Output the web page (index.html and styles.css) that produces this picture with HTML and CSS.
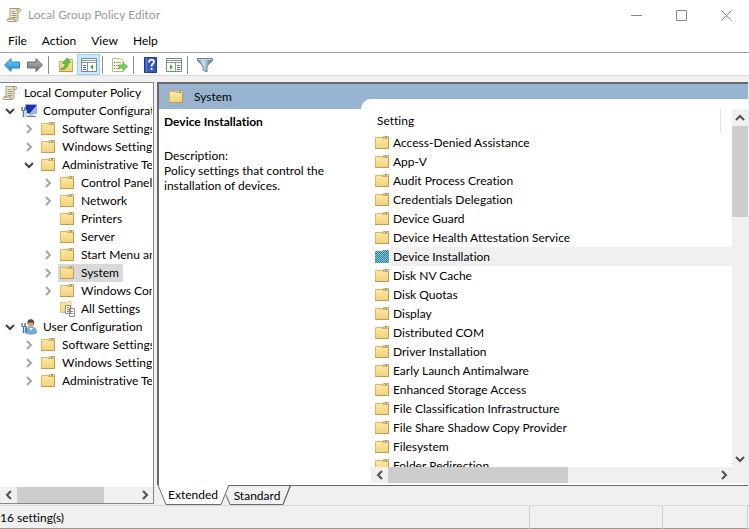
FILE: index.html
```html
<!DOCTYPE html>
<html lang="en">
<head>
<meta charset="utf-8">
<title>Local Group Policy Editor</title>
<link rel="stylesheet" href="styles.css">
</head>
<body>
<svg class="defs" aria-hidden="true">
  <defs>
    <linearGradient id="gold" x1="0" y1="0" x2="0" y2="1"><stop offset="0" stop-color="#ffebab"/><stop offset="1" stop-color="#f3d179"/></linearGradient>
    <linearGradient id="paper" x1="0" y1="0" x2="1" y2="0"><stop offset="0" stop-color="#fffbe9"/><stop offset="1" stop-color="#e0d5b4"/></linearGradient>
    <linearGradient id="blue" x1="0" y1="0" x2="0" y2="1"><stop offset="0" stop-color="#7ad6fa"/><stop offset="1" stop-color="#1584d0"/></linearGradient>
    <linearGradient id="grey" x1="0" y1="0" x2="0" y2="1"><stop offset="0" stop-color="#b5b5b5"/><stop offset="1" stop-color="#757575"/></linearGradient>
    <linearGradient id="steel" x1="0" y1="0" x2="1" y2="0"><stop offset="0" stop-color="#5b84a3"/><stop offset=".4" stop-color="#cfe0ea"/><stop offset="1" stop-color="#3c6687"/></linearGradient>
    <pattern id="checks" width="2" height="2" patternUnits="userSpaceOnUse"><rect width="2" height="2" fill="#8cc8d2"/><path d="M0 0h1v1h-1zM1 1h1v1h-1z" fill="#2a809c"/></pattern>
  </defs>
  <symbol id="folder" viewBox="0 0 16 16"><path d="M1.500 2.500H8l1.500-1h5v12h-13z" fill="url(#gold)" stroke="#dbb963"/><path d="M8.500 3.500l1.500-2h4.500v2z" fill="#fff8dc" stroke="#b99c58" stroke-width=".8"/><path d="M11 2.500h2" stroke="#a8946a"/><path d="M1 13.500h14M14.500 4v10" stroke="#c09d4c" fill="none"/></symbol>
  <symbol id="folder-on" viewBox="0 0 16 16"><path d="M1 2h8V1h6v13H1z" fill="url(#checks)"/></symbol>
  <symbol id="scroll" viewBox="0 0 16 16"><path d="M4 1.500h9.500c1.500 0 1.500 3 0 3H12v7.500c0 1.500-.5 2.500-2 2.500H2c-1.500 0-1.500-2.500 0-2.500h2z" fill="url(#paper)" stroke="#a99c7e"/><path d="M5.500 4.500H9M5.500 6.500h5M5.500 8.500h5M5.500 10.500h5" stroke="#a1967f"/><path d="M2 12h7v2.500M12 4.500c-1 0-1-2 0-3" fill="none" stroke="#9b8d6b"/></symbol>
  <symbol id="computer" viewBox="0 0 16 16"><path d="M4.500 1.500h11v9h-11z" fill="#1830b8" stroke="#a3aebd"/><path d="M15 3v7H9z" fill="#9fb6f5"/><path d="M8 11h4l1 2H7z" fill="#bcc3c9"/><path d="M6 13.500h9" stroke="#707b86"/><path d="M1 4v3l1.500 1L4 7V4M2.500 8v6" fill="none" stroke="#547b9d" stroke-width="1.500"/><path d="M5 7v7" stroke="#b9d7eb" stroke-width="2"/></symbol>
  <symbol id="user" viewBox="0 0 16 16"><path d="M4 14c0-4 2-6 6-6s5.500 2 5.500 6c-3 1.500-8 1.500-11.500 0z" fill="#76a9da" stroke="#5f93c5" stroke-width=".7"/><path d="M8 9l2 2.500L12 9z" fill="#fff"/><ellipse cx="9.800" cy="5.500" rx="2.700" ry="3.500" fill="#d4a17b"/><path d="M6.800 5.500c-1-4 1-5.200 3-5.200 3 0 4 2.500 2.700 6.200l-.7-3L8 3.500z" fill="#5c4030"/><path d="M1 4v3l1.500 1L4 7V4M2.500 8v6" fill="none" stroke="#456f92" stroke-width="1.300"/><path d="M5 7v6" stroke="#2f73a8" stroke-width="1.500"/></symbol>
  <symbol id="all" viewBox="0 0 16 16"><path d="M1.500 1.500H8l1-1h3v11H1.500z" fill="url(#gold)" stroke="#e0c67f"/><path d="M6.500 4.500h5v8h-5zM10.500 7.500h5v8h-5z" fill="#fff" stroke="#8b8b8b"/><path d="M8 6.500h2M8 8.500h2M8 10.500h2M12 10.500h2M12 12.500h2" stroke="#888"/></symbol>
  <symbol id="right" viewBox="0 0 10 10"><path d="M3 1l4 4-4 4" fill="none" stroke="currentColor" stroke-width="2"/></symbol>
  <symbol id="down" viewBox="0 0 10 10"><path d="M1 3l4 4 4-4" fill="none" stroke="currentColor" stroke-width="2"/></symbol>
  <symbol id="arrow" viewBox="0 0 16 16"><path d="M.5 8L7 1.500V5h8.500v6H7v3.500z"/></symbol>
</svg>

<div class="window">
  <header class="title">
    <svg class="icon"><use href="#scroll"/></svg>
    <h1>Local Group Policy Editor</h1>
    <button class="caption" aria-label="Minimize"><svg viewBox="0 0 11 11"><path d="M0 5.500h11"/></svg></button>
    <button class="caption" aria-label="Maximize"><svg viewBox="0 0 11 11"><path d="M.5 .5h10v10H.5z"/></svg></button>
    <button class="caption" aria-label="Close"><svg viewBox="0 0 11 11"><path d="M.5 .5l10 10M10.500 .5l-10 10"/></svg></button>
  </header>
  <nav class="menu">
    <button>File</button><button>Action</button><button>View</button><button>Help</button>
  </nav>
  <div class="toolbar">
    <button class="tool" aria-label="Back"><svg class="icon" fill="url(#blue)" stroke="#2d82b8"><use href="#arrow"/></svg></button>
    <button class="tool" aria-label="Forward"><svg class="icon flip" fill="url(#grey)" stroke="#6b6b6b"><use href="#arrow"/></svg></button>
    <span class="sep"></span>
    <button class="tool" aria-label="Up one level"><svg class="icon" viewBox="0 0 16 16"><path d="M1.500 4.500H8l1.500-2h5v12h-13z" fill="url(#gold)" stroke="#cfae5c"/><path d="M1 14.500h14" stroke="#b8954b"/><path d="M3 11.500c3-.5 4-2.500 4-5H4.500L9 1l4 4.500h-2.500c0 4.500-3 7.500-7.500 7z" fill="#62c63c" stroke="#3f9327" stroke-width=".6"/></svg></button>
    <button class="tool on" aria-label="Show console tree" aria-pressed="true"><svg class="icon" viewBox="0 0 16 16"><path d="M.5 1.500h15v13H.5z" fill="#fff" stroke="#7b8791"/><path d="M1 3.500h14M1 5.500h14M6.500 6v8" stroke="#8b959d"/><path d="M2 8.500h3M2 10.500h3M2 12.500h3" stroke="#54748f"/><path d="M12 7.500v5L9 10z" fill="#39a935"/></svg></button>
    <span class="sep"></span>
    <button class="tool" aria-label="Export list"><svg class="icon" viewBox="0 0 16 16"><path d="M.5 1.500h8l3 3v10H.5z" fill="#fffdee" stroke="#c2b692"/><path d="M2 5.500h1M2 8.500h1M2 11.500h1" stroke="#555"/><path d="M4 5.500h5M4 8.500h4M4 11.500h4" stroke="#a29b86"/><path d="M7 8h4V5.500l4.500 4-4.500 4V11H7z" fill="#74d350" stroke="#4fab36" stroke-width=".7"/></svg></button>
    <span class="sep"></span>
    <button class="tool" aria-label="Help"><svg class="icon" viewBox="0 0 16 16"><path d="M1.500 .5h12v15h-12z" fill="#3558bd" stroke="#203b8d"/><path d="M3.500 1v14" stroke="#6482d5"/><path d="M5.800 5.500c0-4 5.400-3.500 5.100-.5-.2 2-2.400 2-2.400 4.500M8.500 11v2" fill="none" stroke="#fff" stroke-width="1.800"/></svg></button>
    <button class="tool" aria-label="Show action pane"><svg class="icon" viewBox="0 0 16 16"><path d="M.5 1.500h15v13H.5z" fill="#fff" stroke="#7b8791"/><path d="M1 3.500h14M1 5.500h14M9.500 6v8" stroke="#8b959d"/><path d="M11 8.500h3M11 10.500h3M11 12.500h3" stroke="#54748f"/><path d="M4 7.500v5L7 10z" fill="#39a935"/></svg></button>
    <span class="sep"></span>
    <button class="tool" aria-label="Filter"><svg class="icon" viewBox="0 0 16 16"><path d="M.5 1.500h15v2L10 9v6l-4-2V9L.5 3.500z" fill="url(#steel)" stroke="#5f8199"/><path d="M1 2.500h14" stroke="#c6d9e5"/></svg></button>
  </div>

  <main class="panes">
    <section class="left" aria-label="Console tree">
      <ul class="tree">
        <li class="root"><svg class="icon"><use href="#scroll"/></svg><span>Local Computer Policy</span></li>
        <li class="d1 open"><svg class="chev"><use href="#down"/></svg><svg class="icon"><use href="#computer"/></svg><span>Computer Configuration</span></li>
        <li class="d2"><svg class="chev"><use href="#right"/></svg><svg class="icon"><use href="#folder"/></svg><span>Software Settings</span></li>
        <li class="d2"><svg class="chev"><use href="#right"/></svg><svg class="icon"><use href="#folder"/></svg><span>Windows Settings</span></li>
        <li class="d2 open"><svg class="chev"><use href="#down"/></svg><svg class="icon"><use href="#folder"/></svg><span>Administrative Templates</span></li>
        <li class="d3"><svg class="chev"><use href="#right"/></svg><svg class="icon"><use href="#folder"/></svg><span>Control Panel</span></li>
        <li class="d3"><svg class="chev"><use href="#right"/></svg><svg class="icon"><use href="#folder"/></svg><span>Network</span></li>
        <li class="d3"><i class="chev"></i><svg class="icon"><use href="#folder"/></svg><span>Printers</span></li>
        <li class="d3"><i class="chev"></i><svg class="icon"><use href="#folder"/></svg><span>Server</span></li>
        <li class="d3"><svg class="chev"><use href="#right"/></svg><svg class="icon"><use href="#folder"/></svg><span>Start Menu and Taskbar</span></li>
        <li class="d3 current"><svg class="chev"><use href="#right"/></svg><svg class="icon"><use href="#folder"/></svg><span>System</span></li>
        <li class="d3"><svg class="chev"><use href="#right"/></svg><svg class="icon"><use href="#folder"/></svg><span>Windows Components</span></li>
        <li class="d3"><i class="chev"></i><svg class="icon"><use href="#all"/></svg><span>All Settings</span></li>
        <li class="d1 open"><svg class="chev"><use href="#down"/></svg><svg class="icon"><use href="#user"/></svg><span>User Configuration</span></li>
        <li class="d2"><svg class="chev"><use href="#right"/></svg><svg class="icon"><use href="#folder"/></svg><span>Software Settings</span></li>
        <li class="d2"><svg class="chev"><use href="#right"/></svg><svg class="icon"><use href="#folder"/></svg><span>Windows Settings</span></li>
        <li class="d2"><svg class="chev"><use href="#right"/></svg><svg class="icon"><use href="#folder"/></svg><span>Administrative Templates</span></li>
      </ul>
      <div class="bar">
        <button aria-label="Scroll left"><svg class="chev flip"><use href="#right"/></svg></button>
        <div class="track"><div class="thumb tree-thumb"></div></div>
        <button aria-label="Scroll right"><svg class="chev"><use href="#right"/></svg></button>
      </div>
    </section>

    <div class="right">
      <section class="view">
        <div class="banner"><svg class="icon"><use href="#folder"/></svg><h2>System</h2></div>
        <div class="about">
          <h3>Device Installation</h3>
          <p>Description:<br>Policy settings that control the installation of devices.</p>
        </div>
        <div class="listing">
          <div class="cap"></div>
          <div class="rows">
            <div class="colhead"><span>Setting</span></div>
            <ul class="list">
              <li><svg class="icon"><use href="#folder"/></svg><span>Access-Denied Assistance</span></li>
              <li><svg class="icon"><use href="#folder"/></svg><span>App-V</span></li>
              <li><svg class="icon"><use href="#folder"/></svg><span>Audit Process Creation</span></li>
              <li><svg class="icon"><use href="#folder"/></svg><span>Credentials Delegation</span></li>
              <li><svg class="icon"><use href="#folder"/></svg><span>Device Guard</span></li>
              <li><svg class="icon"><use href="#folder"/></svg><span>Device Health Attestation Service</span></li>
              <li class="picked"><svg class="icon"><use href="#folder-on"/></svg><span>Device Installation</span></li>
              <li><svg class="icon"><use href="#folder"/></svg><span>Disk NV Cache</span></li>
              <li><svg class="icon"><use href="#folder"/></svg><span>Disk Quotas</span></li>
              <li><svg class="icon"><use href="#folder"/></svg><span>Display</span></li>
              <li><svg class="icon"><use href="#folder"/></svg><span>Distributed COM</span></li>
              <li><svg class="icon"><use href="#folder"/></svg><span>Driver Installation</span></li>
              <li><svg class="icon"><use href="#folder"/></svg><span>Early Launch Antimalware</span></li>
              <li><svg class="icon"><use href="#folder"/></svg><span>Enhanced Storage Access</span></li>
              <li><svg class="icon"><use href="#folder"/></svg><span>File Classification Infrastructure</span></li>
              <li><svg class="icon"><use href="#folder"/></svg><span>File Share Shadow Copy Provider</span></li>
              <li><svg class="icon"><use href="#folder"/></svg><span>Filesystem</span></li>
              <li><svg class="icon"><use href="#folder"/></svg><span>Folder Redirection</span></li>
            </ul>
          </div>
          <div class="bar upright">
            <button aria-label="Scroll up"><svg class="chev turn"><use href="#down"/></svg></button>
            <div class="track"><div class="thumb list-thumb"></div></div>
            <button aria-label="Scroll down"><svg class="chev"><use href="#down"/></svg></button>
          </div>
          <div class="bar">
            <button aria-label="Scroll left"><svg class="chev flip"><use href="#right"/></svg></button>
            <div class="track"><div class="thumb wide-thumb"></div></div>
            <button aria-label="Scroll right"><svg class="chev"><use href="#right"/></svg></button>
          </div>
          <div class="corner"></div>
        </div>
      </section>
      <div class="tabs">
        <button class="tab active"><svg viewBox="0 0 72 20" aria-hidden="true"><path d="M0 0h72l-8 19.500H9z" fill="#fff"/><path d="M1 0l8 19.500h55L72 0" fill="none" stroke="#696969"/></svg><span>Extended</span></button>
        <button class="tab"><svg viewBox="0 0 66 19" aria-hidden="true"><path d="M2 9l4 9.500h53L66 0M59 18.500L66.500 0" fill="none" stroke="#696969"/></svg><span>Standard</span></button>
      </div>
    </div>
  </main>
  <footer class="status"><span>16 setting(s)</span><span></span><span></span></footer>
</div>
</body>
</html>
```
FILE: styles.css
```css
* { box-sizing: border-box; }

body {
  margin: 0;
  background: #f0f0f0;
  color: #000;
  font: 12px/16px Lato, "Open Sans", sans-serif;
  font-variant-ligatures: none;
}

h1, h2, h3, p, ul { margin: 0; padding: 0; font-size: inherit; font-weight: normal; }
ul { list-style: none; }
svg { display: block; flex: none; overflow: visible; }

button {
  display: flex;
  align-items: center;
  justify-content: center;
  margin: 0;
  padding: 0;
  border: 0;
  background: none;
  color: inherit;
  font: inherit;
  font-variant-ligatures: none;
}

.defs { position: absolute; width: 0; height: 0; }
.icon { width: 16px; height: 16px; }
.chev { width: 10px; height: 10px; flex: none; }
.flip { transform: scaleX(-1); }
.turn { transform: scaleY(-1); }

.window {
  display: flex;
  flex-direction: column;
  height: 100vh;
  border-bottom: 1px solid #999;
}

.title {
  display: flex;
  align-items: center;
  height: 30px;
  padding-left: 6px;
  background: #fff;
  color: #999;
}
.title h1 { flex: 1; margin-left: 6px; }
.caption { width: 45px; height: 30px; }
.caption svg { width: 11px; height: 11px; fill: none; stroke: #888; }

.menu {
  display: flex;
  gap: 15px;
  height: 22px;
  padding-left: 8px;
  background: #fff;
}

.toolbar {
  display: flex;
  align-items: center;
  height: 24px;
  padding-top: 1px;
  border-top: 1px solid #a0a0a0;
  border-bottom: 1px solid #dadada;
  background: #fff;
}
.tool { width: 23px; height: 21px; }
.tool.on { border: 1px solid #99d1ff; background: #cce8ff; }
.sep { width: 1px; height: 18px; margin: 0 5px 0 2px; background: #8c8c8c; }

.panes {
  display: flex;
  gap: 3px;
  flex: 1;
  min-height: 0;
  margin-top: 6px;
}

.left {
  display: flex;
  flex-direction: column;
  width: 154px;
  margin-bottom: 1px;
  border: 1px solid #828790;
  border-left: 0;
  background: #fff;
}
.tree {
  flex: 1;
  min-height: 0;
  margin-right: 1px;
  padding-top: 1px;
  overflow: hidden;
}
.tree li {
  display: flex;
  align-items: center;
  gap: 6px;
  height: 18px;
  white-space: nowrap;
}
.tree .chev { color: #a6a6a6; }
.tree .open .chev { color: #404040; }
.tree .root { padding-left: 2px; }
.tree .d1 { padding-left: 5px; }
.tree .d2 { padding-left: 24px; }
.tree .d3 { padding-left: 43px; }
.tree .current {
  width: 123px;
  background: linear-gradient(to right, transparent 58px, #d9d9d9 58px);
}

.bar {
  display: flex;
  height: 16px;
  background: #f0f0f0;
  color: #505050;
}
.bar button { width: 17px; height: 16px; flex: none; }
.track { flex: 1; }
.thumb { background: #cdcdcd; }
.bar .thumb { height: 100%; }
.tree-thumb { width: 73%; }
.wide-thumb { width: 55%; }
.upright { flex-direction: column; height: auto; }
.upright .list-thumb { height: 28%; }
.upright button { width: 16px; height: 17px; }

.right {
  display: flex;
  flex-direction: column;
  flex: 1;
  min-width: 0;
}
.view {
  display: grid;
  grid-template: 25px minmax(0, 1fr) / 202px minmax(0, 1fr);
  flex: 1;
  min-height: 0;
  margin-right: 1px;
  padding-bottom: 2px;
  border: 2px solid #696969;
  border-right: 0;
  border-bottom-width: 1px;
  background: #fff;
}
.banner {
  display: flex;
  align-items: center;
  gap: 10px;
  grid-area: 1 / 1 / 2 / 3;
  padding-left: 9px;
  background: #99b4d1;
}
.about { grid-area: 2 / 1; padding: 5px; }
.about h3 { font-weight: bold; }
.about p { padding-top: 18px; line-height: 15px; }

.listing {
  display: grid;
  grid-template: 10px minmax(0, 1fr) 16px / 10px minmax(0, 1fr) 16px;
  grid-area: 1 / 2 / 3 / 3;
  padding-top: 15px;
}
.cap {
  grid-area: 1 / 1 / 2 / 4;
  border-top-left-radius: 10px;
  background: #fff;
}
.rows { grid-area: 2 / 2; overflow: hidden; }
.colhead { height: 24px; padding: 0 11px 0 6px; }
.colhead span {
  display: block;
  height: 24px;
  border-right: 1px solid #e0e0e0;
  line-height: 24px;
}
.list li {
  display: flex;
  align-items: center;
  height: 19px;
  padding-left: 3px;
}
.list span { flex: 1; padding-left: 3px; line-height: 19px; white-space: nowrap; }
.list .picked span { background: #f0f0f0; }
.listing .bar { grid-area: 3 / 2; }
.listing .upright { grid-area: 2 / 3; }
.corner { grid-area: 3 / 3; background: #f0f0f0; }

.tabs { display: flex; height: 19px; }
.tab { position: relative; width: 66px; height: 19px; }
.tab.active { width: 72px; height: 20px; margin: -1px -5px 0 0; }
.tab svg { position: absolute; inset: 0; width: 100%; height: 100%; }
.tab span { position: relative; }

.status {
  display: grid;
  grid-template-columns: 1fr 133px 85px;
  height: 23px;
  padding-right: 1px;
  border-top: 1px solid #d7d7d7;
}
.status span { border-right: 1px solid #d0d0d0; line-height: 24px; }
```
